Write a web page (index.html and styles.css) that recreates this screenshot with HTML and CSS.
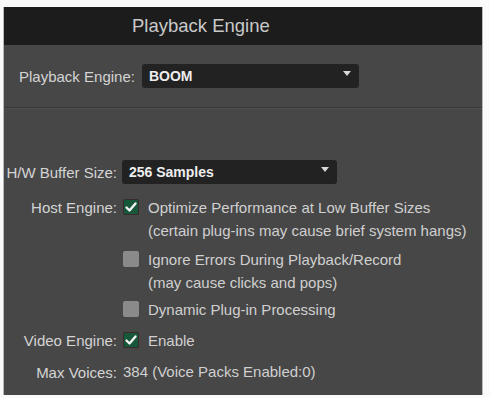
FILE: index.html
```html
<!DOCTYPE html>
<html lang="en">
<head>
  <meta charset="utf-8"/>
  <title>Playback Engine</title>
  <link rel="stylesheet" href="styles.css">
</head>
<body>
  <div class="panel">
    <header class="title-bar">
      <h1>Playback Engine</h1>
    </header>

    <div class="engine-row">
      <span class="label">Playback Engine:</span>
      <div class="select select-engine"><span>BOOM</span><i class="arrow"></i></div>
    </div>

    <div class="settings">
      <span class="label row-buffer">H/W Buffer Size:</span>
      <div class="select select-buffer row-buffer"><span>256 Samples</span><i class="arrow"></i></div>

      <span class="label">Host Engine:</span>
      <div class="option">
        <span class="check on"><svg viewBox="0 0 16 16"><path d="M3.5 8.5 L6.5 11.5 L12.5 4.5"/></svg></span>
        <span>Optimize Performance at Low Buffer Sizes</span>
      </div>
      <span></span>
      <div class="note">(certain plug-ins may cause brief system hangs)</div>

      <span></span>
      <div class="option opt-ignore">
        <span class="check"></span>
        <span>Ignore Errors During Playback/Record</span>
      </div>
      <span></span>
      <div class="note">(may cause clicks and pops)</div>

      <span></span>
      <div class="option opt-dynamic">
        <span class="check"></span>
        <span>Dynamic Plug-in Processing</span>
      </div>

      <span class="label row-video">Video Engine:</span>
      <div class="option row-video">
        <span class="check on"><svg viewBox="0 0 16 16"><path d="M3.5 8.5 L6.5 11.5 L12.5 4.5"/></svg></span>
        <span>Enable</span>
      </div>

      <span class="label row-voices">Max Voices:</span>
      <div class="value row-voices">384 (Voice Packs Enabled:0)</div>
    </div>
  </div>
</body>
</html>
```

FILE: styles.css
```css
body {
  margin: 0;
  background: #fafafa;
  font-family: 'Liberation Sans', Arial, sans-serif;
  font-size: 15px;
  color: #d0d0d0;
}
.panel {
  margin: 7px 0 0 3px;
  width: 478px;
  height: 388px;
  background: #474747;
  border-left: 1px solid #b8b8b8;
  border-right: 1px solid #b8b8b8;
  overflow: hidden;
}
.title-bar {
  height: 38px;
  background: #1c1c1c;
  display: flex;
  align-items: center;
  padding-left: 128px;
}
.title-bar h1 {
  margin: 0;
  font-size: 18.5px;
  font-weight: normal;
  color: #c9c9c9;
}
.engine-row {
  height: 62px;
  display: flex;
  align-items: center;
  gap: 7px;
  padding-left: 15px;
  border-bottom: 1px solid #383838;
  box-shadow: 0 1px 0 #505050;
}
.label {
  color: #d4d4d4;
  text-align: right;
  white-space: nowrap;
}
.select {
  height: 24px;
  background: #222;
  border-radius: 3px;
  display: flex;
  align-items: center;
  justify-content: space-between;
  padding: 0 8px 0 7px;
  color: #eee;
  font-size: 14px;
  font-weight: bold;
  box-sizing: border-box;
}
.select-engine { width: 217px; }
.select-buffer { width: 215px; margin-left: -1px; }
.arrow {
  width: 0;
  height: 0;
  border-left: 4px solid transparent;
  border-right: 4px solid transparent;
  border-top: 5px solid #d8d8d8;
  margin-top: -6px;
}
.settings {
  display: grid;
  grid-template-columns: 117px 1fr;
  column-gap: 6px;
  align-items: center;
  padding-top: 52px;
  margin-left: -4px;
}
.settings .row-buffer { margin-bottom: 11px; }
.option {
  display: flex;
  align-items: center;
  gap: 9px;
  height: 24px;
}
.note {
  padding-left: 25px;
  height: 24px;
  line-height: 24px;
}
.opt-ignore { margin-top: 4px; }
.opt-dynamic { margin-top: 2px; }
.check {
  width: 16px;
  height: 16px;
  background: #8a8a8a;
  border-radius: 2px;
  flex: none;
}
.check.on {
  background: #17573a;
  box-shadow: inset 0 0 0 1px #3a2a2c;
}
.check svg {
  width: 16px;
  height: 16px;
  display: block;
}
.check svg path {
  fill: none;
  stroke: #f2f2f2;
  stroke-width: 2.4;
  stroke-linecap: round;
  stroke-linejoin: round;
}
.row-video { margin-top: 7px; }
.row-voices { margin-top: 8px; }
.value { height: 24px; line-height: 24px; }
```
